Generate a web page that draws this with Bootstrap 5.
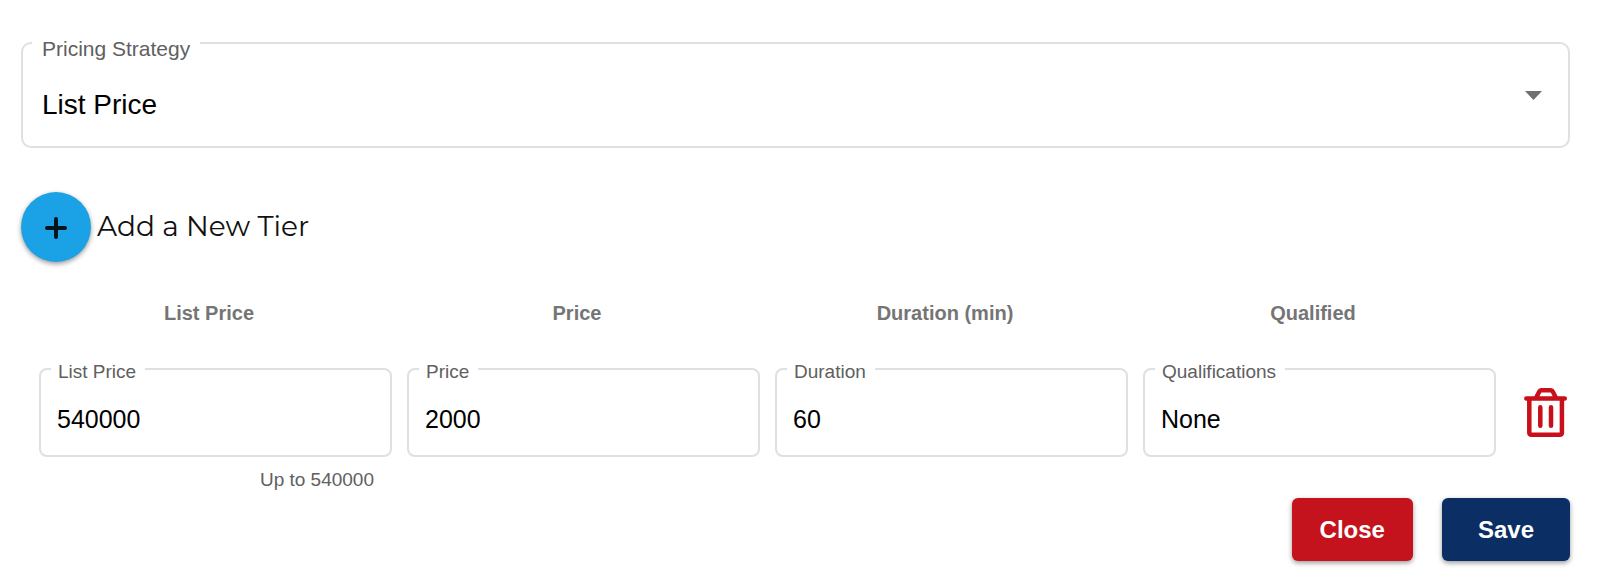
<!DOCTYPE html>
<html lang="en">
<head>
<meta charset="utf-8">
<meta name="viewport" content="width=device-width, initial-scale=1">
<title>Pricing Strategy</title>
<link href="https://cdn.jsdelivr.net/npm/bootstrap@5.3.0/dist/css/bootstrap.min.css" rel="stylesheet">
<style>
  body { font-family: "Liberation Sans", Arial, sans-serif; color: #111; background: #fff; }
  .pricing-form { padding: 42px 30px 20px 21px; }

  /* outlined field whose label sits in a notch of the border */
  .outlined .form-control, .outlined .form-select {
    border: 2px solid #e0e0e0; border-radius: 8px; background: none; color: #000;
    font-size: 25px; line-height: 28px; padding: 35px 16px 22px;
  }
  .outlined .form-select { font-size: 28px; line-height: 32px; padding: 45px 19px 25px; border-radius: 10px; }
  .notch { position: absolute; top: -7px; left: 12px; padding: 0 9px 0 7px; background: #fff; color: #606060; font-size: 19px; line-height: 22px; }
  .notch-lg { top: -5px; left: 11px; padding: 0 10px; font-size: 21px; line-height: 24px; }
  .caret { position: absolute; top: 49px; right: 28px; pointer-events: none; }
  .helper { font-size: 19px; line-height: 22px; color: #606060; margin: 12px 18px 0 0; }

  .add-row { gap: 6px; margin: 44px 0 39px; }
  .btn-add { width: 70px; height: 70px; background: #1ba1e5; color: #07141c; box-shadow: 0 2px 5px rgba(0,0,0,.4); }
  .btn-add:hover { background: #1690cf; }
  .add-label { font-family: Montserrat, Inter, sans-serif; font-size: 28px; line-height: 32px; padding-bottom: 2px; }

  .tiers { table-layout: fixed; margin-left: 4px; width: calc(100% - 4px); }
  .tiers th { font-size: 20px; line-height: 24px; color: #757575; padding: 0 0 43px; }
  .tiers td { padding: 0 1px 0 14px; vertical-align: top; }
  .tiers .col-action { width: 73px; }
  .tiers td.col-action { padding: 0 3px 0 0; }
  .btn-trash { height: 89px; color: #c90f19; }

  .btn-action { font-size: 24px; line-height: 31px; padding: 16px 28px; border: 0; border-radius: 6px; color: #fff; box-shadow: 0 2px 5px rgba(0,0,0,.4); }
  .btn-close-form { background: #c5131d; }
  .btn-save { background: #0b2e64; padding: 16px 36px; }
  .btn-action:hover { color: #fff; background: #444; }
  .actions { gap: 29px; margin-top: 7px; }
</style>
</head>
<body>
<form class="pricing-form">
  <div class="outlined position-relative">
    <select class="form-select" id="strategy"><option>List Price</option></select>
    <label class="notch notch-lg" for="strategy">Pricing Strategy</label>
    <svg class="caret" width="17" height="9" viewBox="0 0 17 9" aria-hidden="true"><path d="M0 0h17L8.500 9z" fill="#707070"/></svg>
  </div>

  <div class="add-row d-flex align-items-center">
    <button type="button" id="add" class="btn btn-add rounded-circle border-0 p-0 d-flex align-items-center justify-content-center" aria-label="Add tier">
      <svg width="22" height="24" viewBox="0 0 22 24" fill="none" stroke="currentColor" stroke-width="4" stroke-linecap="round" aria-hidden="true"><path d="M11 4v18M2 13h18"/></svg>
    </button>
    <label for="add" class="add-label">Add a New Tier</label>
  </div>

  <table class="tiers">
    <thead>
      <tr class="text-center">
        <th scope="col">List Price</th>
        <th scope="col">Price</th>
        <th scope="col">Duration (min)</th>
        <th scope="col">Qualified</th>
        <td class="col-action"></td>
      </tr>
    </thead>
    <tbody>
      <tr>
        <td>
          <div class="outlined position-relative">
            <input class="form-control" id="list-price" type="text" value="540000">
            <label class="notch" for="list-price">List Price</label>
          </div>
          <p class="helper text-end">Up to 540000</p>
        </td>
        <td>
          <div class="outlined position-relative">
            <input class="form-control" id="price" type="text" value="2000">
            <label class="notch" for="price">Price</label>
          </div>
        </td>
        <td>
          <div class="outlined position-relative">
            <input class="form-control" id="duration" type="text" value="60">
            <label class="notch" for="duration">Duration</label>
          </div>
        </td>
        <td>
          <div class="outlined position-relative">
            <input class="form-control" id="qualifications" type="text" value="None">
            <label class="notch" for="qualifications">Qualifications</label>
          </div>
        </td>
        <td class="col-action">
          <button type="button" class="btn btn-trash border-0 p-0 ms-auto d-flex align-items-center" aria-label="Delete tier">
            <svg width="43" height="49" viewBox="0 0 43 49" fill="none" stroke="currentColor" stroke-width="4.500" stroke-linecap="round" stroke-linejoin="round" aria-hidden="true">
              <path d="M2.300 10.500h38.500M5.300 10.500v34q0 2.200 2.200 2.200h28.200q2.200 0 2.200-2.200V10.500M12 10l2.800-5.600q1-2.100 3-2.100h8.400q2 0 3 2.100L32 10M16.300 19.300v18.500M27 19.300v18.500"/>
            </svg>
          </button>
        </td>
      </tr>
    </tbody>
  </table>

  <div class="actions d-flex justify-content-end">
    <button type="button" class="btn btn-action btn-close-form fw-bold">Close</button>
    <button type="submit" class="btn btn-action btn-save fw-bold">Save</button>
  </div>
</form>
<script src="https://cdn.jsdelivr.net/npm/bootstrap@5.3.0/dist/js/bootstrap.bundle.min.js"></script>
</body>
</html>
